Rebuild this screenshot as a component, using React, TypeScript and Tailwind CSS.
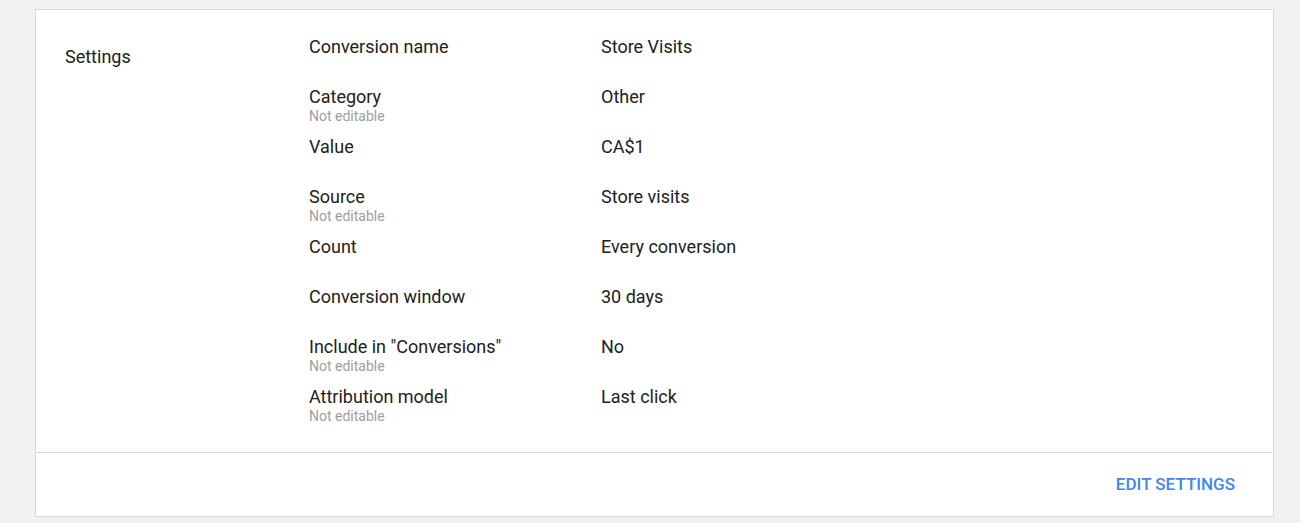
import React from "react";

const rows: { label: string; value: string; note?: boolean }[] = [
  { label: "Conversion name", value: "Store Visits" },
  { label: "Category", value: "Other", note: true },
  { label: "Value", value: "CA$1" },
  { label: "Source", value: "Store visits", note: true },
  { label: "Count", value: "Every conversion" },
  { label: "Conversion window", value: "30 days" },
  { label: 'Include in "Conversions"', value: "No", note: true },
  { label: "Attribution model", value: "Last click", note: true },
];

export default function App() {
  return (
    <div
      className="w-[1300px] h-[523px] bg-[#f1f1f1] pt-[9px] pl-[35px]"
      style={{ fontFamily: "Roboto, 'Liberation Sans', sans-serif" }}
    >
      <div className="w-[1239px] bg-white border border-[#dadada] text-[#212121]">
        <div className="flex pt-[26px] h-[442px]">
          <div className="w-[273px] pl-[29px] pt-[10px] text-[18px] leading-[22px]">Settings</div>
          <div className="flex flex-col">
            {rows.map((r) => (
              <div key={r.label} className="flex h-[50px]">
                <div className="w-[292px]">
                  <div className="text-[18px] leading-[22px]">{r.label}</div>
                  {r.note && (
                    <div className="text-[14px] leading-[16px] text-[#9e9e9e]">Not editable</div>
                  )}
                </div>
                <div className="text-[18px] leading-[22px]">{r.value}</div>
              </div>
            ))}
          </div>
        </div>
        <div className="border-t border-[#dadada] h-[64px] flex items-center justify-end pr-[38px]">
          <button className="text-[#4285f4] font-medium text-[17px]">EDIT SETTINGS</button>
        </div>
      </div>
    </div>
  );
}
